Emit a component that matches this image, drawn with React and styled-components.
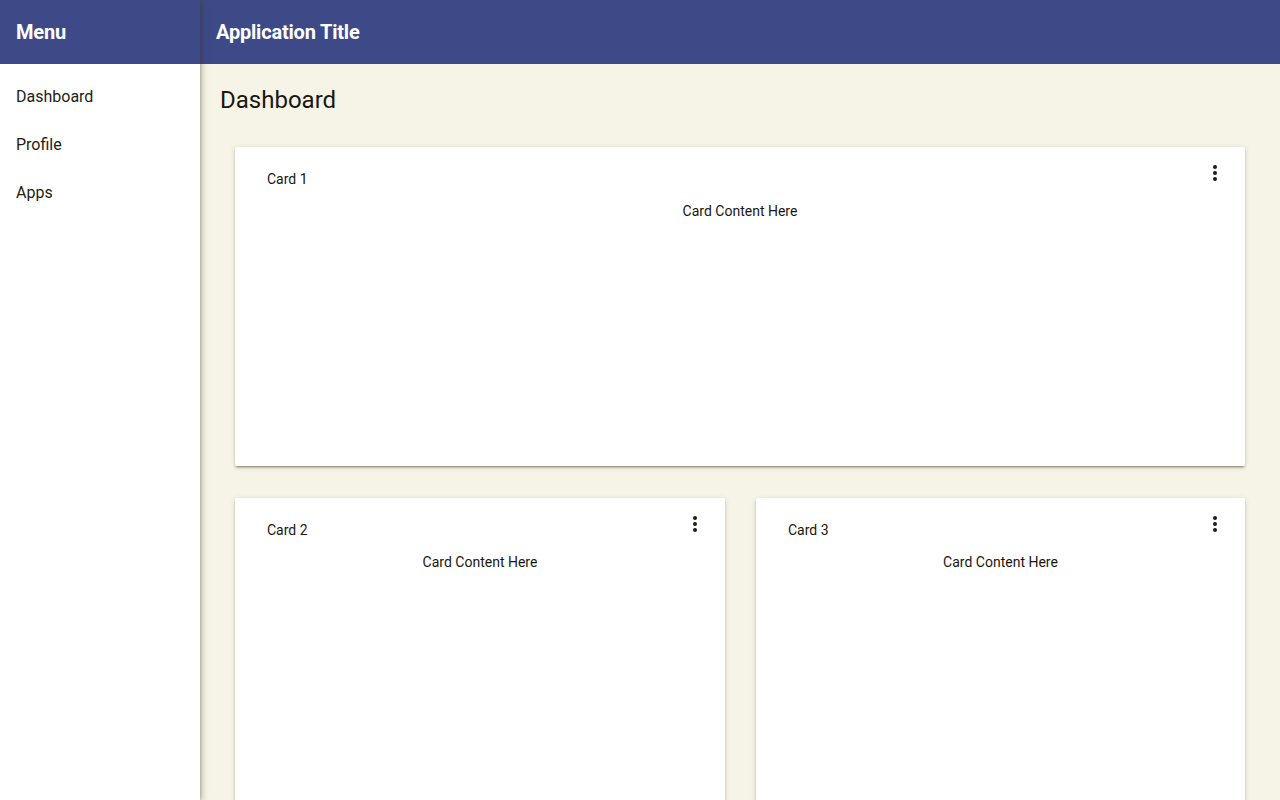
import React from "react";
import styled, { createGlobalStyle } from "styled-components";

const GlobalStyle = createGlobalStyle`
  html, body { margin: 0; padding: 0; overflow: hidden; }
  body { font-family: Roboto, "Noto Sans", "Liberation Sans", sans-serif; }
  * { box-sizing: border-box; }
`;

const Shell = styled.div`
  display: flex;
  width: 1280px;
  height: 800px;
`;

const Sidebar = styled.aside`
  width: 200px;
  flex-shrink: 0;
  display: flex;
  flex-direction: column;
  background: #ffffff;
  position: relative;
  z-index: 2;
  box-shadow: 2px 0 6px rgba(60, 50, 20, 0.3), 1px 0 2px rgba(60, 50, 20, 0.15);
`;

const Bar = styled.div`
  height: 64px;
  flex-shrink: 0;
  display: flex;
  align-items: center;
  padding-left: 16px;
  background: #3d4a87;
  color: #ffffff;
  font-size: 20px;
  font-weight: 700;
  letter-spacing: -0.2px;
`;

const Nav = styled.nav`
  display: flex;
  flex-direction: column;
  padding-top: 8px;
`;

const NavItem = styled.div`
  height: 48px;
  display: flex;
  align-items: center;
  padding-left: 16px;
  font-size: 16px;
  color: #231d14;
`;

const Main = styled.main`
  flex: 1;
  display: flex;
  flex-direction: column;
  min-width: 0;
`;

const Content = styled.div`
  flex: 1;
  background: #f6f4e6;
  overflow: hidden;
`;

const PageTitle = styled.h1`
  margin: 0;
  padding: 20px 20px 0;
  font-size: 24px;
  line-height: 32px;
  font-weight: 400;
  color: #1a1610;
`;

const Grid = styled.div`
  display: grid;
  grid-template-columns: 490px 489px;
  column-gap: 31px;
  row-gap: 32px;
  padding: 31px 35px 0;
`;

const Card = styled.section`
  grid-column: ${(p) => (p.$wide ? "1 / -1" : "auto")};
  height: 319px;
  background: #ffffff;
  border-radius: 2px;
  box-shadow: 0 2px 2px rgba(60, 45, 20, 0.22), 0 1px 5px rgba(60, 45, 20, 0.16),
    0 3px 1px -2px rgba(60, 45, 20, 0.2);
  display: flex;
  flex-direction: column;
  padding: 14px 18px 0 32px;
`;

const CardHeader = styled.div`
  display: flex;
  justify-content: space-between;
  align-items: flex-start;
`;

const CardTitle = styled.div`
  margin-top: 8px;
  font-size: 14px;
  line-height: 20px;
  color: #1a1610;
`;

const MenuButton = styled.div`
  width: 24px;
  height: 24px;
  display: flex;
  align-items: center;
  justify-content: center;
  color: #1e1a14;
`;

const CardBody = styled.div`
  margin-top: 12px;
  margin-right: 14px;
  text-align: center;
  font-size: 14px;
  line-height: 20px;
  color: #1a1610;
`;

const MoreVert = () => (
  <svg width="24" height="24" viewBox="0 0 24 24" fill="currentColor">
    <circle cx="12" cy="6" r="2" />
    <circle cx="12" cy="12" r="2" />
    <circle cx="12" cy="18" r="2" />
  </svg>
);

const cards = [
  { title: "Card 1", wide: true },
  { title: "Card 2" },
  { title: "Card 3" },
];

export default function App() {
  return (
    <>
      <GlobalStyle />
      <Shell>
        <Sidebar>
          <Bar>Menu</Bar>
          <Nav>
            <NavItem>Dashboard</NavItem>
            <NavItem>Profile</NavItem>
            <NavItem>Apps</NavItem>
          </Nav>
        </Sidebar>
        <Main>
          <Bar>Application Title</Bar>
          <Content>
            <PageTitle>Dashboard</PageTitle>
            <Grid>
              {cards.map((c) => (
                <Card key={c.title} $wide={c.wide}>
                  <CardHeader>
                    <CardTitle>{c.title}</CardTitle>
                    <MenuButton>
                      <MoreVert />
                    </MenuButton>
                  </CardHeader>
                  <CardBody>Card Content Here</CardBody>
                </Card>
              ))}
            </Grid>
          </Content>
        </Main>
      </Shell>
    </>
  );
}
